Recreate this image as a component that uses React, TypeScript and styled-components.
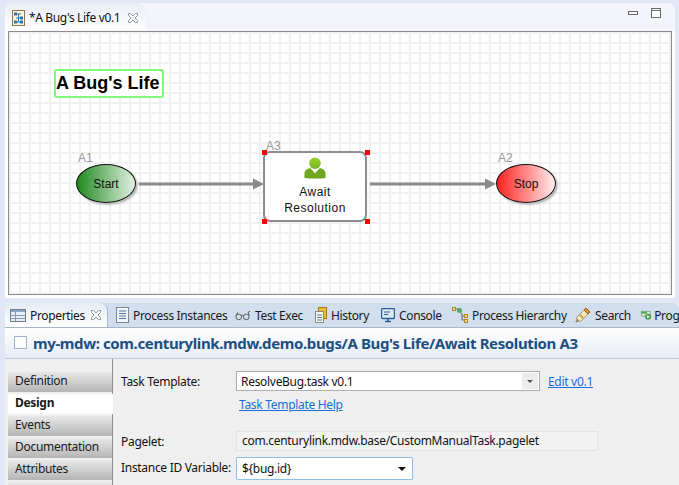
import React, { FC } from "react";
import styled, { createGlobalStyle } from "styled-components";

const GlobalStyle = createGlobalStyle`
  html, body { margin: 0; padding: 0; background: #e2e7f6; }
  body { font-family: "Noto Sans", "Open Sans", sans-serif; font-size: 12px; color: #111; }
`;

const Page = styled.div`
  width: 679px;
  height: 485px;
  overflow: hidden;
  background: #e2e7f6;
  display: flex;
  flex-direction: column;
  padding: 3px 0 0 5px;
  box-sizing: border-box;
`;

const EditorPane = styled.section`
  height: 295px;
  margin-right: 4px;
  flex: none;
  background: #fff;
  border-radius: 8px 8px 0 0;
  display: flex;
  flex-direction: column;
`;

const EditorTabBar = styled.div`
  height: 28px;
  flex: none;
  background: #f3f5fb;
  border-radius: 8px 8px 0 0;
  display: flex;
  align-items: stretch;
  justify-content: space-between;
`;

const EditorTab = styled.div`
  width: 141px;
  box-sizing: border-box;
  background: linear-gradient(#e9edf6, #fff);
  border-radius: 8px 8px 0 0;
  display: flex;
  align-items: center;
  padding: 1px 0 0 7px;
  gap: 4px;
  letter-spacing: -0.35px;
`;

const CloseSlot = styled.span<{ $gap: number }>`
  display: flex;
  margin-left: ${p => p.$gap}px;
`;

const WindowButtons = styled.div`
  display: flex;
  align-items: center;
  gap: 13px;
  padding: 0 14px 8px 0;
`;

const Canvas = styled.div`
  position: relative;
  margin: 0 3px 0 3px;
  height: 264px;
  flex: none;
  box-sizing: border-box;
  border: 1px solid #8b8b8f;
  background-color: #fff;
  background-image: linear-gradient(to right, #f1f1f1 2px, transparent 2px),
    linear-gradient(to bottom, #f1f1f1 2px, transparent 2px);
  background-size: 10px 10px;
  overflow: hidden;
`;

const TitleBox = styled.div`
  position: absolute;
  left: 45px;
  top: 37px;
  width: 110px;
  height: 29px;
  box-sizing: border-box;
  border: 2px solid #7cfa7c;
  border-radius: 3px;
  background: #fff;
  font: bold 18px "Liberation Sans", Arial, sans-serif;
  color: #000;
  line-height: 25px;
  white-space: nowrap;
`;

const NodeLabel = styled.div<{ $x: number; $y: number }>`
  position: absolute;
  left: ${p => p.$x}px;
  top: ${p => p.$y}px;
  font: 12px "Liberation Sans", Arial, sans-serif;
  color: #999;
`;

const Ellipse = styled.div<{ $x: number; $tint: string; $end: string }>`
  position: absolute;
  left: ${p => p.$x}px;
  top: 132px;
  width: 60px;
  height: 39px;
  box-sizing: border-box;
  border: 1px solid #111;
  border-radius: 50%;
  background: linear-gradient(to right, ${p => p.$tint}, ${p => p.$end});
  box-shadow: 2px 2px 2px #bbb;
  display: flex;
  align-items: center;
  justify-content: center;
  font: 12px "Liberation Sans", Arial, sans-serif;
  color: #111;
`;

const TaskNode = styled.div`
  position: absolute;
  left: 254px;
  top: 119px;
  width: 104px;
  height: 71px;
  box-sizing: border-box;
  border: 2px solid #8c8c8c;
  border-radius: 7px;
  background: #fff;
  display: flex;
  flex-direction: column;
  align-items: center;
  padding-top: 3px;
  font: 12px/16px "Liberation Sans", Arial, sans-serif;
  letter-spacing: 0.5px;
  color: #111;
  text-align: center;
`;

const TaskIcon = styled.svg`
  flex: none;
  margin-bottom: 5px;
`;

const Handle = styled.span<{ $x: number; $y: number }>`
  position: absolute;
  left: ${p => p.$x}px;
  top: ${p => p.$y}px;
  width: 5px;
  height: 5px;
  background: #f00;
`;

const Edge = styled.svg<{ $x: number; $w: number }>`
  position: absolute;
  left: ${p => p.$x}px;
  top: 144px;
  width: ${p => p.$w}px;
  height: 16px;
`;

const PropertiesPane = styled.section`
  margin-top: 5px;
  flex: 1;
  background: #efefef;
  display: flex;
  flex-direction: column;
  min-height: 0;
`;

const ViewTabBar = styled.div`
  height: 25px;
  flex: none;
  box-sizing: border-box;
  background: #d1deee;
  border-bottom: 1px solid #a9b5c8;
  border-radius: 6px 6px 0 0;
  display: flex;
  align-items: center;
  white-space: nowrap;
  overflow: hidden;
`;

const ActiveViewTab = styled.div`
  width: 103px;
  height: 25px;
  flex: none;
  box-sizing: border-box;
  background: linear-gradient(#e6ecf5, #fff);
  border-radius: 6px 8px 0 0;
  border-right: 1px solid #a9b5c8;
  display: flex;
  align-items: center;
  padding-left: 5px;
  gap: 4px;
  letter-spacing: -0.35px;
`;

const ViewTab = styled.div<{ $width: number; $pad?: number; $gap?: number }>`
  flex: none;
  width: ${p => p.$width}px;
  box-sizing: border-box;
  padding-left: ${p => p.$pad ?? 0}px;
  display: flex;
  align-items: center;
  gap: ${p => p.$gap ?? 4}px;
  letter-spacing: -0.35px;
  color: #1a1a1a;
`;

const FormTitle = styled.div`
  height: 31px;
  flex: none;
  box-sizing: border-box;
  background: linear-gradient(#fff, #e7ecf5);
  border-bottom: 1px solid #bcc8d8;
  display: flex;
  align-items: center;
  padding: 0 0 1px 9px;
  gap: 6px;
  font-size: 15px;
  font-weight: 700;
  letter-spacing: -0.38px;
  color: #1b4f82;
  white-space: nowrap;
`;

const TitleCheck = styled.span`
  width: 11px;
  height: 11px;
  flex: none;
  background: #fff;
  border: 1px solid #9db6d3;
`;

const FormBody = styled.div`
  flex: 1;
  min-height: 0;
  display: flex;
  padding-left: 3px;
  overflow: hidden;
`;

const SideNav = styled.nav`
  width: 105px;
  flex: none;
  box-sizing: border-box;
  border-right: 1px solid #8f8f8f;
  padding-top: 13px;
  display: flex;
  flex-direction: column;
  gap: 2px;
`;

const NavItem = styled.div<{ $active?: boolean }>`
  height: 20px;
  flex: none;
  padding-left: 7px;
  line-height: 17px;
  letter-spacing: -0.3px;
  color: #1a1a1a;
  background: ${p => (p.$active ? "#fff" : "linear-gradient(#e8e8e8, #b4b4b4)")};
  font-weight: ${p => (p.$active ? 700 : 400)};
  margin-right: ${p => (p.$active ? "-1px" : "0")};
`;

const Fields = styled.div`
  flex: 1;
  display: grid;
  grid-template-columns: 115px max-content 1fr;
  grid-template-rows: 20px 20px 11px 20px 26px;
  row-gap: 3px;
  align-content: start;
  align-items: center;
  padding: 12px 0 0 8px;
  letter-spacing: -0.3px;
`;

const FieldLabel = styled.label<{ $row: number }>`
  grid-column: 1;
  grid-row: ${p => p.$row};
  ${p => (p.$row === 5 ? "align-self: end; margin-bottom: 4px;" : "")}
`;

const Combo = styled.div`
  grid-column: 2;
  grid-row: 1;
  width: 304px;
  height: 20px;
  box-sizing: border-box;
  background: #fff;
  border: 1px solid #ababb3;
  display: flex;
  align-items: center;
  justify-content: space-between;
  padding-left: 4px;
`;

const ComboButton = styled.span`
  width: 16px;
  height: 16px;
  margin-right: 1px;
  background: #ececec;
  display: flex;
  align-items: center;
  justify-content: center;
`;

const Arrow = styled.span<{ $dark?: boolean }>`
  width: 0;
  height: 0;
  border-left: ${p => (p.$dark ? 4 : 3)}px solid transparent;
  border-right: ${p => (p.$dark ? 4 : 3)}px solid transparent;
  border-top: ${p => (p.$dark ? 4 : 3)}px solid ${p => (p.$dark ? "#111" : "#555")};
`;

const FormLink = styled.a<{ $col: number; $row: number; $indent: number }>`
  grid-column: ${p => p.$col};
  grid-row: ${p => p.$row};
  margin-left: ${p => p.$indent}px;
  color: #1b6ed8;
  text-decoration: underline;
  white-space: nowrap;
`;

const ReadOnlyField = styled.div`
  grid-column: 2 / 4;
  grid-row: 4;
  width: 362px;
  height: 20px;
  box-sizing: border-box;
  background: #f2f2f2;
  border: 1px solid #e2e2e2;
  line-height: 18px;
  padding-left: 5px;
  white-space: nowrap;
`;

const SelectField = styled.div`
  grid-column: 2;
  grid-row: 5;
  align-self: end;
  width: 177px;
  height: 23px;
  box-sizing: border-box;
  background: #fff;
  border: 1px solid #8fc0ea;
  border-radius: 1px;
  display: flex;
  align-items: center;
  justify-content: space-between;
  padding: 0 6px 0 5px;
`;

const Person: FC = () => (
  <TaskIcon width="24" height="23" viewBox="0 0 24 24">
    <defs>
      <linearGradient id="personHead" x1="0" y1="0" x2="0" y2="1">
        <stop offset="0" stopColor="#9ad232" />
        <stop offset="1" stopColor="#78b41e" />
      </linearGradient>
    </defs>
    <circle cx="12" cy="7.500" r="6" fill="url(#personHead)" />
    <path d="M1 23v-4.500c0-3.500 3-5.500 6-6l5 5.500 5-5.500c3 .5 6 2.500 6 6V23c-3 .7-19 .7-22 0z" fill="#6fa81e" />
  </TaskIcon>
);

const ProcessIcon: FC = () => (
  <svg width="13" height="16" viewBox="0 0 13 16">
    <rect x="0.500" y="0.500" width="12" height="15" fill="#fbf4dc" stroke="#8c7a4a" />
    <path d="M4 4h5M6.500 4v8M4 8h5M4 12h5" stroke="#3a6ea5" />
    <rect x="2" y="2.500" width="3" height="3" fill="#3a6ea5" />
    <rect x="8" y="6.500" width="3" height="3" fill="#3a6ea5" />
    <rect x="8" y="10.500" width="3" height="3" fill="#3a6ea5" />
    <rect x="2" y="10.500" width="3" height="3" fill="#3a6ea5" />
  </svg>
);

const CloseIcon: FC = () => (
  <svg width="12" height="12" viewBox="0 0 12 12">
    <path d="M1.500 1.500l2 0 2.500 2.500 2.500-2.500 2 0 0 2-2.500 2.500 2.500 2.500 0 2-2 0-2.500-2.500-2.500 2.500-2 0 0-2 2.500-2.500-2.500-2.500z" fill="#fff" stroke="#8f98a3" />
  </svg>
);

const TableIcon: FC = () => (
  <svg width="16" height="13" viewBox="0 0 16 13">
    <rect x="0.500" y="0.500" width="15" height="12" fill="#e8eef6" stroke="#6f7f92" />
    <rect x="1" y="1" width="14" height="2" fill="#8fa6c2" />
    <path d="M5.500 3v9M1 6.500h14M1 9.500h14" stroke="#8a9bb0" />
  </svg>
);

const ListIcon: FC = () => (
  <svg width="13" height="16" viewBox="0 0 13 16">
    <rect x="0.500" y="0.500" width="12" height="15" fill="#f2f5fa" stroke="#7c8794" />
    <path d="M3 4h7M3 6.500h7M3 9h7M3 11.500h7" stroke="#4f6f96" />
  </svg>
);

const GlassesIcon: FC = () => (
  <svg width="16" height="11" viewBox="0 0 17 11">
    <g fill="none" stroke="#555" strokeWidth="1">
      <ellipse cx="4" cy="7" rx="3" ry="3" />
      <ellipse cx="12" cy="7" rx="3" ry="3" />
      <path d="M7 6c1-1 2-1 2 0M1 6l2-4M15 6l-1-4 2-1" />
    </g>
  </svg>
);

const HistoryIcon: FC = () => (
  <svg width="12" height="16" viewBox="0 0 12 16">
    <rect x="3.500" y="0.500" width="8" height="11" fill="#f0b92e" stroke="#a77a16" />
    <rect x="0.500" y="4.500" width="8" height="11" fill="#f6f6f0" stroke="#8a8a80" />
    <path d="M2 8h5M2 10.500h5M2 13h5" stroke="#5878a0" />
  </svg>
);

const ConsoleIcon: FC = () => (
  <svg width="14" height="15" viewBox="0 0 14 15">
    <rect x="0.500" y="0.500" width="13" height="10" rx="1.500" fill="#dde8f5" stroke="#2f5f9a" strokeWidth="1.400" />
    <path d="M3 4h6M3 6.500h4" stroke="#2f5f9a" />
    <path d="M4 13.500h6M7 11v2" stroke="#2f5f9a" strokeWidth="1.600" />
  </svg>
);

const HierarchyIcon: FC = () => (
  <svg width="16" height="16" viewBox="0 0 16 16">
    <path d="M3 2h4M7 4l3 3v6M10 9h3M10 13h3" fill="none" stroke="#666" />
    <rect x="0.500" y="0.500" width="3" height="3" fill="#f4d880" stroke="#b08a20" />
    <circle cx="7.500" cy="3.500" r="2.500" fill="#5aa860" />
    <rect x="12.500" y="7.500" width="3" height="3" fill="#f4d880" stroke="#b08a20" />
    <rect x="12.500" y="12.500" width="3" height="3" fill="#f4d880" stroke="#b08a20" />
  </svg>
);

const SearchIcon: FC = () => (
  <svg width="16" height="16" viewBox="0 0 16 16">
    <path d="M1 15l1-5 7-7 4 4-7 7z" fill="#f2e6b8" stroke="#a89a70" />
    <path d="M9 3l2-2 4 4-2 2z" fill="#d89a30" stroke="#94651a" />
    <path d="M1 15l1.500-3 1.500 1.500z" fill="#777" />
    <path d="M5 8l3 3" stroke="#c8a050" strokeWidth="2" />
  </svg>
);

const ProgressIcon: FC = () => (
  <svg width="15" height="14" viewBox="0 0 15 14">
    <rect x="0.500" y="1.500" width="13" height="7" fill="#dfe7df" stroke="#7c8f7c" />
    <rect x="1" y="2" width="8" height="3" fill="#4caa4c" />
    <circle cx="10.500" cy="9.500" r="4.500" fill="#3f9f4a" />
    <path d="M9 7l4 2.500-4 2.500z" fill="#fff" />
  </svg>
);

const EdgeLine: FC<{ x: number; width: number }> = ({ x, width }) => (
  <Edge $x={x} $w={width} viewBox={`0 0 ${width} 16`}>
    <path d={`M0 8H${width - 10}`} stroke="#8a8a8a" strokeWidth="3" />
    <path d={`M${width - 11} 2.500L${width} 8 ${width - 11} 13.500z`} fill="#8a8a8a" />
  </Edge>
);

const App: FC = () => (
  <>
    <GlobalStyle />
    <Page>
      <EditorPane>
        <EditorTabBar>
          <EditorTab>
            <ProcessIcon />
            <span>*A Bug's Life v0.1</span>
            <CloseSlot $gap={3}>
              <CloseIcon />
            </CloseSlot>
          </EditorTab>
          <WindowButtons>
            <svg width="10" height="5" viewBox="0 0 10 5">
              <rect x="0.500" y="0.500" width="9" height="3" fill="#fff" stroke="#666" />
            </svg>
            <svg width="10" height="10" viewBox="0 0 10 10">
              <rect x="0.500" y="0.500" width="9" height="9" fill="#fff" stroke="#666" />
              <path d="M1 2.500h8" stroke="#666" />
            </svg>
          </WindowButtons>
        </EditorTabBar>
        <Canvas>
          <TitleBox>A Bug's Life</TitleBox>
          <NodeLabel $x={69} $y={119}>A1</NodeLabel>
          <Ellipse $x={67} $tint="#1f8a1f" $end="#e4f0e4">Start</Ellipse>
          <EdgeLine x={130} width={125} />
          <NodeLabel $x={257} $y={107}>A3</NodeLabel>
          <TaskNode>
            <Person />
            <span>Await</span>
            <span>Resolution</span>
          </TaskNode>
          <Handle $x={253} $y={118} />
          <Handle $x={356} $y={118} />
          <Handle $x={253} $y={187} />
          <Handle $x={356} $y={187} />
          <EdgeLine x={361} width={126} />
          <NodeLabel $x={489} $y={119}>A2</NodeLabel>
          <Ellipse $x={487} $tint="#ff2020" $end="#ffeeee">Stop</Ellipse>
        </Canvas>
      </EditorPane>
      <PropertiesPane>
        <ViewTabBar>
          <ActiveViewTab>
            <TableIcon />
            <span>Properties</span>
            <CloseSlot $gap={1}>
              <CloseIcon />
            </CloseSlot>
          </ActiveViewTab>
          <ViewTab $width={127} $pad={8}>
            <ListIcon />
            <span>Process Instances</span>
          </ViewTab>
          <ViewTab $width={80}>
            <GlassesIcon />
            <span>Test Exec</span>
          </ViewTab>
          <ViewTab $width={66}>
            <HistoryIcon />
            <span>History</span>
          </ViewTab>
          <ViewTab $width={71}>
            <ConsoleIcon />
            <span>Console</span>
          </ViewTab>
          <ViewTab $width={123}>
            <HierarchyIcon />
            <span>Process Hierarchy</span>
          </ViewTab>
          <ViewTab $width={66}>
            <SearchIcon />
            <span>Search</span>
          </ViewTab>
          <ViewTab $width={60} $gap={3}>
            <ProgressIcon />
            <span>Progress</span>
          </ViewTab>
        </ViewTabBar>
        <FormTitle>
          <TitleCheck />
          <span>my-mdw: com.centurylink.mdw.demo.bugs/A Bug's Life/Await Resolution A3</span>
        </FormTitle>
        <FormBody>
          <SideNav>
            <NavItem>Definition</NavItem>
            <NavItem $active>Design</NavItem>
            <NavItem>Events</NavItem>
            <NavItem>Documentation</NavItem>
            <NavItem>Attributes</NavItem>
            <NavItem />
          </SideNav>
          <Fields>
            <FieldLabel $row={1}>Task Template:</FieldLabel>
            <Combo>
              <span>ResolveBug.task v0.1</span>
              <ComboButton>
                <Arrow />
              </ComboButton>
            </Combo>
            <FormLink $col={3} $row={1} $indent={8}>Edit v0.1</FormLink>
            <FormLink $col={2} $row={2} $indent={3}>Task Template Help</FormLink>
            <FieldLabel $row={4}>Pagelet:</FieldLabel>
            <ReadOnlyField>com.centurylink.mdw.base/CustomManualTask.pagelet</ReadOnlyField>
            <FieldLabel $row={5}>Instance ID Variable:</FieldLabel>
            <SelectField>
              <span>{"${bug.id}"}</span>
              <Arrow $dark />
            </SelectField>
          </Fields>
        </FormBody>
      </PropertiesPane>
    </Page>
  </>
);

export default App;
